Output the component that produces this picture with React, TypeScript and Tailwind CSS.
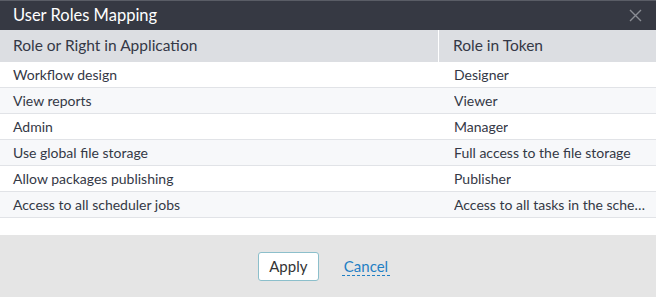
import React from 'react';

const rows: [string, string][] = [
  ['Workflow design', 'Designer'],
  ['View reports', 'Viewer'],
  ['Admin', 'Manager'],
  ['Use global file storage', 'Full access to the file storage'],
  ['Allow packages publishing', 'Publisher'],
  ['Access to all scheduler jobs', 'Access to all tasks in the scheduler'],
];

export default function App() {
  return (
    <div className="w-[656px] h-[297px] flex flex-col bg-white text-[#343846] font-['Lato','Liberation_Sans',sans-serif] overflow-hidden">
      {/* title bar */}
      <div className="h-[30px] shrink-0 bg-[#363943] border-t border-[#5a5d66] flex items-center justify-between pl-[13px] pr-[10px]">
        <span className="text-[16.5px] text-white leading-none">User Roles Mapping</span>
        <button className="text-[#8a8d94] p-1">
          <svg width="13" height="13" viewBox="0 0 13 13" stroke="currentColor" strokeWidth="1.4">
            <path d="M1 1L12 12M12 1L1 12" />
          </svg>
        </button>
      </div>

      {/* table */}
      <div className="flex flex-col">
        <div className="h-[32px] flex bg-[#dcdee2] text-[15.5px]">
          <div className="w-[439px] flex items-center pl-[13px] border-r border-white">Role or Right in Application</div>
          <div className="flex-1 flex items-center pl-[14px]">Role in Token</div>
        </div>
        {rows.map(([app, token], i) => (
          <div
            key={app}
            className={`h-[26px] flex text-[14px] border-b border-[#e1e3e7] ${i % 2 === 1 ? 'bg-[#f7f8fa]' : 'bg-white'}`}
          >
            <div className="w-[440px] flex items-center pl-[13px]">{app}</div>
            <div className="flex-1 min-w-0 flex items-center pl-[14px] pr-[10px]">
              <span className="truncate">{token}</span>
            </div>
          </div>
        ))}
      </div>

      <div className="flex-1" />

      {/* footer */}
      <div className="h-[62px] shrink-0 bg-[#e5e5e5] flex items-center justify-center gap-[23px] pr-[8px]">
        <button className="h-[29px] w-[61px] bg-white border border-[#8cbfcb] rounded-[3px] text-[15px] text-[#333]">
          Apply
        </button>
        <button className="text-[15px] text-[#1f7fc4] border-b border-dashed border-[#1f7fc4] leading-[18px] px-[2px]">
          Cancel
        </button>
      </div>
    </div>
  );
}
